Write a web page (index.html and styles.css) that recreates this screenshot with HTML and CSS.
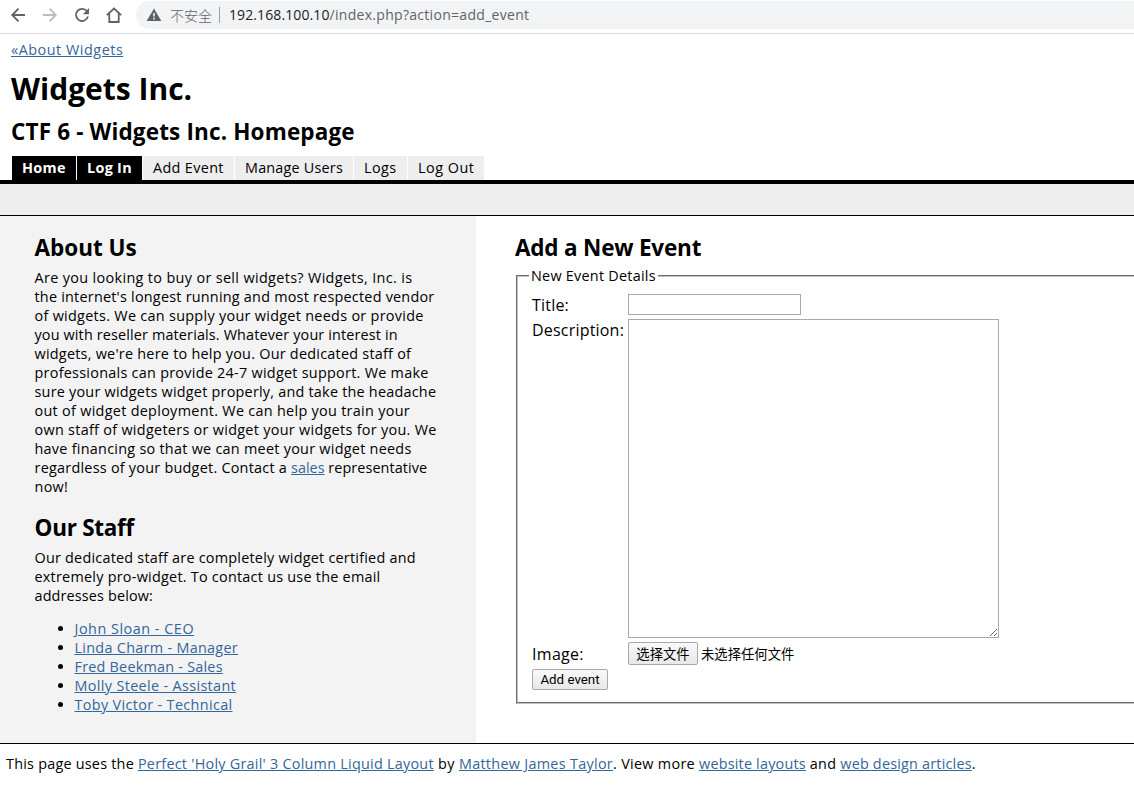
FILE: index.html
```html
<!DOCTYPE html>
<html lang="en">
<head>
<meta charset="utf-8">
<title>Widgets Inc.</title>
<link rel="stylesheet" href="styles.css">
</head>
<body>
<div class="toolbar">
  <svg class="nav-icons" width="136" height="30" viewBox="0 0 136 30" fill="none" stroke="#5f6368" stroke-width="1.8">
    <path d="M25 15H12.500M18.500 8.700L12.200 15l6.300 6.300"/>
    <path d="M43 15h12.500M49.500 8.700L55.800 15l-6.300 6.300" stroke="#babcbe"/>
    <path d="M87 11.200A6.100 6.100 0 1 0 88 16.600"/>
    <path d="M89 8v6.200h-6.200z" fill="#5f6368" stroke="none"/>
    <path d="M106.800 15.200L114 8.500l7.200 6.700M109.300 13.500V22h9.400v-8.500"/>
  </svg>
  <div class="omnibox">
    <svg class="warn" width="16" height="14" viewBox="0 0 16 14"><path d="M8 0.500L15.300 13H0.700z" fill="#5f6368"/><path d="M7.200 5h1.600v3.500H7.200zM7.200 9.800h1.600v1.600H7.200z" fill="#f1f3f4"/></svg>
    <span class="insecure">不安全</span>
    <span class="url"><span class="host">192.168.100.10</span><span class="path">/index.php?action=add_event</span></span>
  </div>
</div>
<header class="header">
  <p class="back"><a href="#" class="ls50">«About Widgets</a></p>
  <h1>Widgets Inc.</h1>
  <h2 class="tagline ls15">CTF 6 - Widgets Inc. Homepage</h2>
  <nav class="tabs">
    <a class="tab active home ls30" href="#">Home</a>
    <a class="tab active login ls30" href="#">Log In</a>
    <a class="tab add ls35" href="#">Add Event</a>
    <a class="tab users ls20" href="#">Manage Users</a>
    <a class="tab logs ls40" href="#">Logs</a>
    <a class="tab out ls50" href="#">Log Out</a>
  </nav>
</header>
<div class="band"></div>
<main class="columns">
  <section class="about">
    <h2>About Us</h2>
    <p>
      <span class="ls35">Are you looking to buy or sell widgets? Widgets, Inc. is</span><br>
      <span class="ls22">the internet's longest running and most respected vendor</span><br>
      <span class="ls30">of widgets. We can supply your widget needs or provide</span><br>
      <span class="ls15">you with reseller materials. Whatever your interest in</span><br>
      <span class="ls25">widgets, we're here to help you. Our dedicated staff of</span><br>
      <span class="ls27">professionals can provide 24-7 widget support. We make</span><br>
      <span class="ls22">sure your widgets widget properly, and take the headache</span><br>
      <span class="ls30">out of widget deployment. We can help you train your</span><br>
      <span class="ls30">own staff of widgeters or widget your widgets for you. We</span><br>
      <span class="ls27">have financing so that we can meet your widget needs</span><br>
      <span class="ls25">regardless of your budget. Contact a </span><a href="#">sales</a><span class="ls0"> representative</span><br>
      <span class="ls30">now!</span>
    </p>
    <h2 class="staff">Our Staff</h2>
    <p>
      <span class="ls22">Our dedicated staff are completely widget certified and</span><br>
      <span class="ls25">extremely pro-widget. To contact us use the email</span><br>
      <span class="ls15">addresses below:</span>
    </p>
    <ul>
      <li><a href="#" class="ls50">John Sloan - CEO</a></li>
      <li><a href="#" class="ls30">Linda Charm - Manager</a></li>
      <li><a href="#" class="ls22">Fred Beekman - Sales</a></li>
      <li><a href="#" class="ls35">Molly Steele - Assistant</a></li>
      <li><a href="#" class="ls35">Toby Victor - Technical</a></li>
    </ul>
  </section>
  <section class="event">
    <h2>Add a New Event</h2>
    <fieldset>
      <legend class="ls25">New Event Details</legend>
      <div class="form">
        <label class="ls20">Title:</label><input class="title" type="text">
        <label class="desc ls20">Description:</label><textarea></textarea>
        <label class="img ls30">Image:</label>
        <div class="file"><button type="button">选择文件</button><span>未选择任何文件</span></div>
      </div>
      <button class="submit" type="button">Add event</button>
    </fieldset>
  </section>
</main>
<footer class="footer"><span class="ls22">This page uses the </span><a href="#" class="ls25">Perfect 'Holy Grail' 3 Column Liquid Layout</a><span class="ls40"> by </span><a href="#" class="ls30">Matthew James Taylor</a><span class="ls30">. View more </span><a href="#" class="ls20">website layouts</a><span class="ls27"> and </span><a href="#" class="ls20">web design articles</a>.</footer>
</body>
</html>
```
FILE: styles.css
```css
* { box-sizing: border-box; }
body {
  margin: 0;
  height: 805px;
  overflow: hidden;
  background: #fff;
  color: #000;
  font: 14.4px/19px "Open Sans", "Noto Sans CJK SC", sans-serif;
}
a { color: #369; }
h1, h2, p, ul { margin: 0; }
h1 { font-size: 30px; line-height: 40px; font-weight: 700; }
h2 { font-size: 22.5px; line-height: 30px; font-weight: 700; }

/* Tracking steps */
.ls0 { letter-spacing: 0.08px; }
.ls15 { letter-spacing: 0.15px; }
.ls20 { letter-spacing: 0.2px; }
.ls22 { letter-spacing: 0.23px; }
.ls25 { letter-spacing: 0.25px; }
.ls27 { letter-spacing: 0.27px; }
.ls30 { letter-spacing: 0.3px; }
.ls35 { letter-spacing: 0.35px; }
.ls40 { letter-spacing: 0.4px; }
.ls50 { letter-spacing: 0.52px; }

.toolbar { display: flex; height: 34px; border-bottom: 1px solid #dadce0; }
.omnibox {
  display: flex;
  flex: 1;
  align-items: center;
  height: 28px;
  margin-top: 1px;
  padding-left: 10px;
  border-radius: 14px 0 0 14px;
  background: #f1f3f4;
  font-size: 14px;
}
.insecure {
  margin-left: 8px;
  padding-right: 7px;
  border-right: 1px solid #9aa0a6;
  color: #5f6368;
  line-height: 16px;
  font-family: "Noto Sans CJK SC", sans-serif;
  font-weight: 300;
}
.url { margin: -2px 0 0 9px; color: #5f6368; }
.host { color: #202124; letter-spacing: 0.1px; }
.path { letter-spacing: 0.3px; }

.header { padding: 6px 11px 0; height: 146px; }
.back { height: 19px; }
h1 { margin-top: 10px; }
.tagline { margin-top: 8px; }
.tabs { display: flex; gap: 1px; margin: 9px 0 0 1px; }
.tab {
  height: 24px;
  padding: 2px 0 2px 10px;
  background: #eee;
  color: #000;
  text-decoration: none;
  line-height: 20px;
  white-space: nowrap;
}
.home { width: 64px; }
.login { width: 65px; }
.add { width: 91px; }
.users { width: 118px; }
.logs { width: 53px; }
.out { width: 76px; }
.active { background: #000; color: #fff; font-weight: 700; }

.band { height: 36px; border-top: 4px solid #000; border-bottom: 1px solid #000; background: #eee; }

.columns { display: flex; height: 527px; }
.about { flex: none; width: 476px; padding: 17px 30px 0 34.5px; background: #f3f3f3; white-space: nowrap; }
.about p { margin-top: 5px; }
.about .staff { margin-top: 17px; letter-spacing: -0.27px; }
ul { margin-top: 14px; padding-left: 40px; }

.event { flex: none; width: 700px; padding: 17px 0 0 39px; white-space: nowrap; }
.event h2 { letter-spacing: -0.2px; }
fieldset {
  width: 660px;
  height: 438px;
  margin: 3px 0 0 1px;
  padding: 9px 14px 0;
  border: 2px groove #c0c0c0;
}
legend { padding: 0 2px; margin-left: -3px; height: 19px; }
.form {
  display: grid;
  grid-template-columns: 96px auto;
  justify-items: start;
  font-size: 16px;
}
label { line-height: 22px; }
input, textarea { border: 1px solid #a9a9a9; padding: 1px; margin: 0; }
.title { width: 173px; height: 21px; }
textarea { width: 371px; height: 319px; margin-top: 3px; }
.desc { padding-top: 3px; }
button {
  border: 1px solid #a9a9a9;
  border-radius: 2px;
  background: linear-gradient(#f9f9f9, #e8e8e8);
  font: 13.333px "Noto Sans CJK SC", sans-serif;
  color: #000;
  padding: 0;
}
.file { display: flex; gap: 3px; align-items: center; margin-top: 4px; font: 13.333px/23px "Noto Sans CJK SC", sans-serif; }
.img { padding-top: 5px; }
.file button { width: 70px; height: 23px; }
.submit { width: 76px; height: 21px; margin-top: 4px; font-family: Roboto, sans-serif; }

.footer { height: 62px; padding: 10px 6px; border-top: 1px solid #000; white-space: pre; }
```
